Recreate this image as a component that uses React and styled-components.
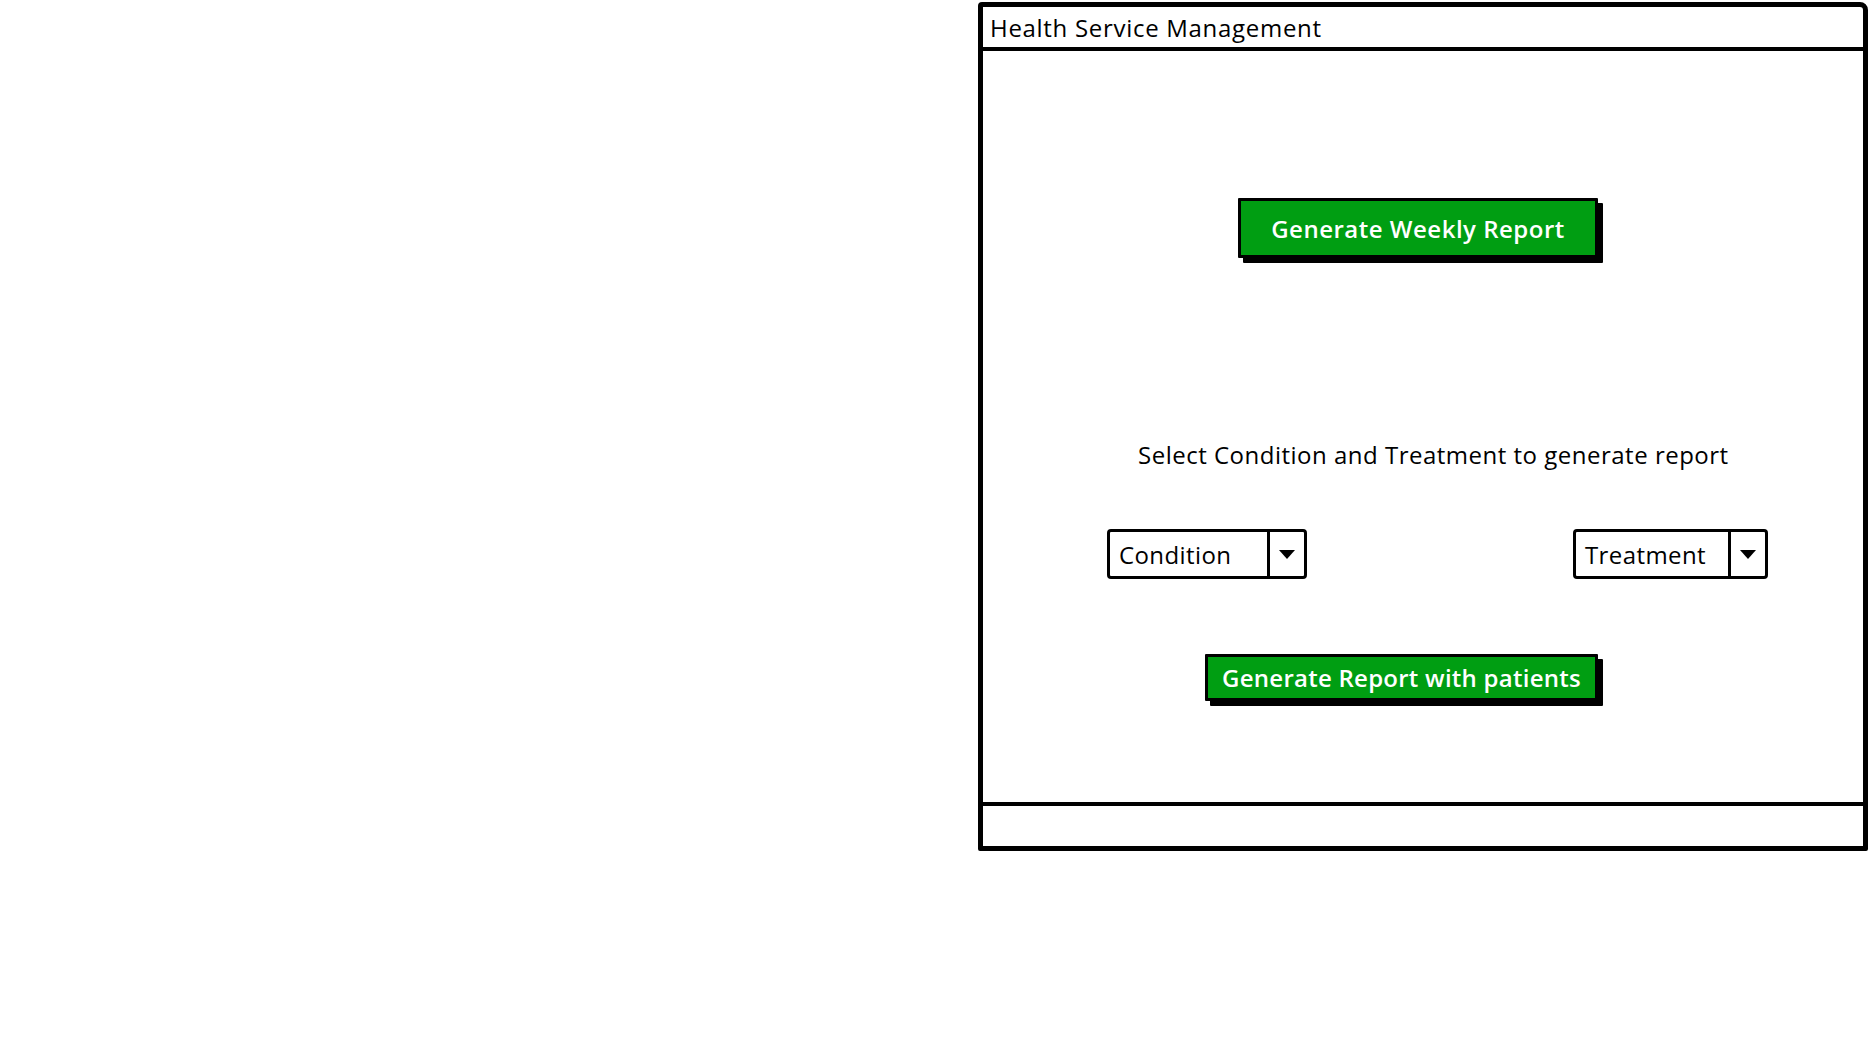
import React from "react";
import styled, { createGlobalStyle } from "styled-components";

const GlobalStyle = createGlobalStyle`
  html, body {
    margin: 0;
    padding: 0;
    background: #ffffff;
  }
  body {
    font-family: "Open Sans", "Liberation Sans", sans-serif;
    color: #000;
  }
`;

const Page = styled.div`
  width: 1870px;
  height: 1060px;
  display: flex;
  justify-content: flex-end;
  align-items: flex-start;
  padding: 2px 2px 0 0;
  box-sizing: border-box;
`;

const Window = styled.div`
  width: 890px;
  height: 849px;
  border: 5px solid #000;
  border-radius: 4px 8px 2px 2px;
  box-sizing: border-box;
  display: flex;
  flex-direction: column;
`;

const TitleBar = styled.div`
  height: 40px;
  border-bottom: 4px solid #000;
  display: flex;
  align-items: center;
  padding-left: 7px;
  font-size: 24px;
  letter-spacing: 0.7px;
`;

const Body = styled.div`
  flex: 1;
  display: flex;
  flex-direction: column;
  align-items: flex-start;
`;

const Footer = styled.div`
  height: 40px;
  border-top: 4px solid #000;
`;

const Row = styled.div`
  display: flex;
  align-items: center;
  margin-top: ${(p) => p.$top}px;
  padding-left: ${(p) => p.$left}px;
  gap: ${(p) => p.$gap || 0}px;
`;

const GreenButton = styled.button`
  height: ${(p) => p.$h}px;
  width: ${(p) => p.$w}px;
  background: #009e12;
  color: #fff;
  border: 3px solid #000;
  border-radius: 1px;
  box-shadow: 5px 5px 0 #000;
  font-family: "Open Sans", "Liberation Sans", sans-serif;
  font-size: 24px;
  font-weight: 600;
  letter-spacing: ${(p) => p.$ls || 0}px;
  padding: 0;
  display: flex;
  align-items: center;
  justify-content: center;
  cursor: pointer;
`;

const Caption = styled.div`
  font-size: 24px;
  letter-spacing: 0.5px;
`;

const Select = styled.div`
  width: ${(p) => p.$w}px;
  height: 50px;
  border: 3px solid #000;
  border-radius: 4px;
  box-sizing: border-box;
  display: flex;
  align-items: stretch;
`;

const SelectLabel = styled.div`
  flex: 1;
  display: flex;
  align-items: center;
  padding-left: 9px;
  font-size: 24px;
  letter-spacing: 0.4px;
`;

const SelectArrow = styled.div`
  width: 34px;
  border-left: 3px solid #000;
  display: flex;
  align-items: center;
  justify-content: center;
`;

const Triangle = styled.span`
  width: 0;
  height: 0;
  border-left: 8px solid transparent;
  border-right: 8px solid transparent;
  border-top: 9px solid #000;
`;

const Dropdown = ({ label, width }) => (
  <Select $w={width}>
    <SelectLabel>{label}</SelectLabel>
    <SelectArrow>
      <Triangle />
    </SelectArrow>
  </Select>
);

export default function App() {
  return (
    <>
      <GlobalStyle />
      <Page>
        <Window>
          <TitleBar>Health Service Management</TitleBar>
          <Body>
            <Row $top={147} $left={255}>
              <GreenButton $w={360} $h={60} $ls={0.5}>Generate Weekly Report</GreenButton>
            </Row>
            <Row $top={180} $left={155}>
              <Caption>Select Condition and Treatment to generate report</Caption>
            </Row>
            <Row $top={58} $left={124} $gap={266}>
              <Dropdown label="Condition" width={200} />
              <Dropdown label="Treatment" width={195} />
            </Row>
            <Row $top={75} $left={222}>
              <GreenButton $w={393} $h={47} $ls={0.25}>Generate Report with patients</GreenButton>
            </Row>
          </Body>
          <Footer />
        </Window>
      </Page>
    </>
  );
}
